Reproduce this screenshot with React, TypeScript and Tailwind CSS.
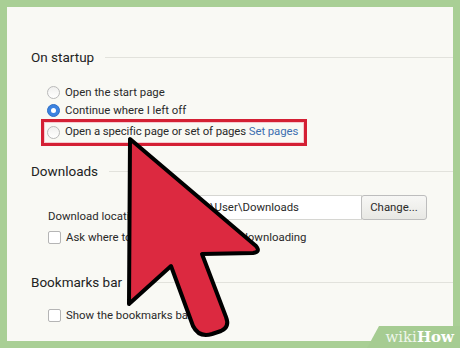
import React from "react";

const font = { fontFamily: "Roboto, 'Noto Sans', sans-serif" };

function Radio({ checked }: { checked?: boolean }) {
  if (checked) {
    return (
      <span className="w-[13px] h-[13px] rounded-full bg-[#3b82e0] border border-[#2f6fc4] flex items-center justify-center shrink-0">
        <span className="w-[5px] h-[5px] rounded-full bg-white" />
      </span>
    );
  }
  return <span className="w-[13px] h-[13px] rounded-full border border-[#b9b9b9] bg-gradient-to-b from-[#f0f0ee] to-white shrink-0" />;
}

function Check() {
  return <span className="w-[13px] h-[13px] rounded-[2px] border border-[#b5b5b5] bg-white shrink-0" />;
}

function Heading({ title }: { title: string }) {
  return (
    <div className="flex items-center">
      <span className="text-[13.5px] text-[#222] leading-none">{title}</span>
      <span className="flex-1 h-px bg-[#e2e2dc] ml-[11px]" />
    </div>
  );
}

export default function App() {
  return (
    <div className="relative w-[460px] h-[348px] bg-[#a9cf95] overflow-hidden pt-[7px] pl-[7px]" style={font}>
      <div className="w-[446px] h-[334px] bg-[#f9f9f4] pl-[24px] text-[11.4px] text-[#2a2a2a] whitespace-nowrap">
        <div className="pt-[44px]">
          <Heading title="On startup" />
        </div>
        <div className="pl-[16px] pt-[19px] flex flex-col">
          <div className="flex items-center gap-[5px] h-[18px]">
            <Radio />
            <span>Open the start page</span>
          </div>
          <div className="flex items-center gap-[5px] h-[18px]">
            <Radio checked />
            <span>Continue where I left off</span>
          </div>
          <div className="-ml-[6px] -mt-px w-[266px] h-[27px] border-[3px] border-[#d42034] shadow-[inset_0_0_0_1px_#f6c9cf] flex items-center gap-[5px] pl-[3px]">
            <Radio />
            <span className="tracking-[-0.1px]">
              Open a specific page or set of pages <span className="text-[#3d6fb0]">Set pages</span>
            </span>
          </div>
        </div>
        <div className="pt-[19px]">
          <Heading title="Downloads" />
        </div>
        <div className="pl-[17px] pt-[17px]">
          <div className="flex items-start">
            <span className="mt-[13px] w-[112px]">Download location:</span>
            <div className="w-[202px] h-[25px] border border-[#d6d6d2] bg-white flex items-center pl-[5px]">
              C:\Users\User\Downloads
            </div>
            <div className="w-[66px] h-[25px] border border-[#bdbdbd] rounded-[3px] bg-gradient-to-b from-[#f7f7f5] to-[#e8e8e4] flex items-center justify-center -ml-px">
              Change...
            </div>
          </div>
          <div className="flex items-center gap-[5px] mt-[4px]">
            <Check />
            <span>Ask where to save each file before downloading</span>
          </div>
        </div>
        <div className="pt-[30px]">
          <Heading title="Bookmarks bar" />
        </div>
        <div className="pl-[17px] pt-[17px]">
          <div className="flex items-center gap-[5px]">
            <Check />
            <span>Show the bookmarks bar</span>
          </div>
        </div>
      </div>

      <svg className="absolute left-0 top-0" width="460" height="348" viewBox="0 0 460 348">
        <path
          d="M130 139 L129 304 L171 266 L193 326 Q199 338 212 334 L221 331 Q230 327 226 317 L202 254 L253 253 Q261 252 256 246 Z"
          fill="#dc2940"
          stroke="#000"
          strokeWidth="4"
          strokeLinejoin="round"
        />
      </svg>

      <div className="absolute right-0 bottom-0 w-[93px] h-[22px] bg-[#a6cc92] [clip-path:polygon(12px_0,100%_0,100%_100%,0_100%)] flex items-center justify-end pr-[6px]">
        <span className="text-[15px] font-bold text-white leading-none" style={{ fontFamily: "'DejaVu Serif', serif" }}>
          <span className="font-normal text-[#eef6ea]">wiki</span>How
        </span>
      </div>
    </div>
  );
}
